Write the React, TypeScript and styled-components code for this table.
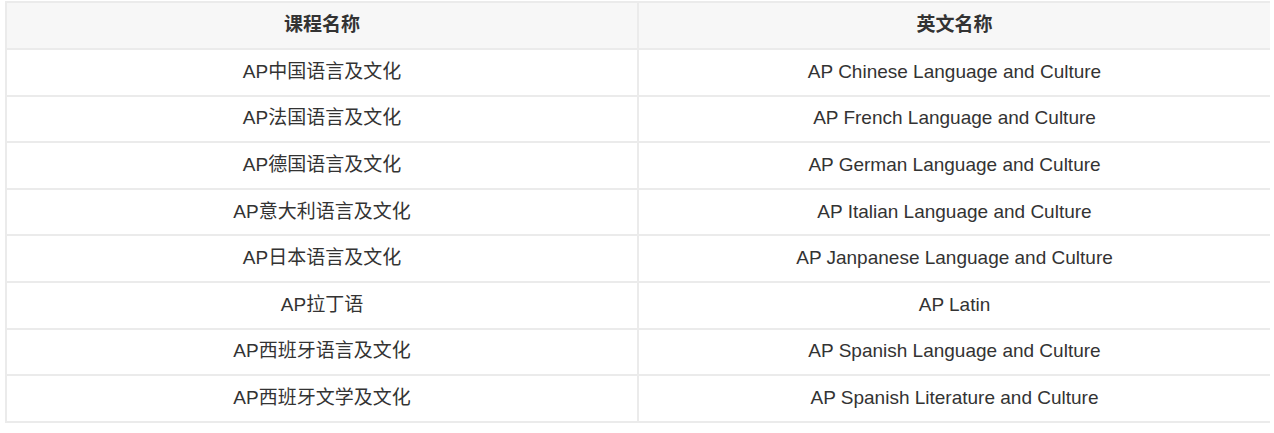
import React from "react";
import styled, { createGlobalStyle } from "styled-components";

const GlobalStyle = createGlobalStyle`
  html, body {
    margin: 0;
    padding: 0;
    background: #ffffff;
  }
  body {
    font-family: "Liberation Sans", Arial, "Noto Sans CJK SC", sans-serif;
    color: #333333;
  }
`;

const Page = styled.div`
  padding: 1px 4px 0 5px;
`;

const Table = styled.table`
  width: 100%;
  border-collapse: collapse;
  table-layout: fixed;
  font-family: "Liberation Sans", Arial, "Noto Sans CJK SC", sans-serif;
  font-size: 19px;
  line-height: 22px;
  color: #333333;
`;

const HeadRow = styled.tr`
  height: 47px;
  background: #f7f7f7;
`;

const BodyRow = styled.tr`
  height: 46.6px;
  background: #ffffff;
`;

const Th = styled.th`
  border: 2px solid #ebebeb;
  border-right: none;
  padding: 0 10px 1px;
  font-weight: 700;
  text-align: center;
  vertical-align: middle;
  &:first-child {
    border-right: 2px solid #ebebeb;
  }
`;

const Td = styled.td`
  border: 2px solid #ebebeb;
  border-right: none;
  padding: 0 10px 1px;
  font-weight: 400;
  text-align: center;
  vertical-align: middle;
  &:first-child {
    border-right: 2px solid #ebebeb;
  }
`;

const rows: [string, string][] = [
  ["AP中国语言及文化", "AP Chinese Language and Culture"],
  ["AP法国语言及文化", "AP French Language and Culture"],
  ["AP德国语言及文化", "AP German Language and Culture"],
  ["AP意大利语言及文化", "AP Italian Language and Culture"],
  ["AP日本语言及文化", "AP Janpanese Language and Culture"],
  ["AP拉丁语", "AP Latin"],
  ["AP西班牙语言及文化", "AP Spanish Language and Culture"],
  ["AP西班牙文学及文化", "AP Spanish Literature and Culture"],
];

export default function App() {
  return (
    <>
      <GlobalStyle />
      <Page>
        <Table>
          <thead>
            <HeadRow>
              <Th>课程名称</Th>
              <Th>英文名称</Th>
            </HeadRow>
          </thead>
          <tbody>
            {rows.map(([cn, en]) => (
              <BodyRow key={cn}>
                <Td>{cn}</Td>
                <Td>{en}</Td>
              </BodyRow>
            ))}
          </tbody>
        </Table>
      </Page>
    </>
  );
}
